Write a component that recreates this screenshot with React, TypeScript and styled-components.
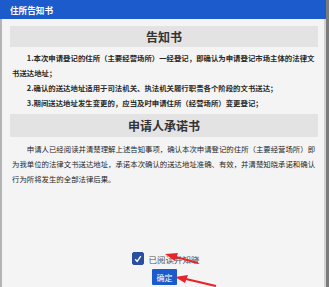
import React, { useState } from "react";
import styled, { createGlobalStyle } from "styled-components";

const GlobalStyle = createGlobalStyle`
  html, body {
    margin: 0;
    padding: 0;
    background: #7a7a7a;
  }
  body {
    font-family: "Noto Sans CJK SC", "Noto Sans", sans-serif;
  }
`;

const Dialog = styled.div`
  position: relative;
  width: 326px;
  height: 287px;
  display: flex;
  flex-direction: column;
  background: #f4f4f4;
  overflow: hidden;
`;

const TitleBar = styled.div`
  height: 19px;
  flex-shrink: 0;
  display: flex;
  align-items: center;
  padding-left: 10px;
  background: #1c5bcb;
  color: #fff;
  font-size: 8.6px;
  font-weight: bold;
`;

const Body = styled.div`
  flex: 1;
  display: flex;
  flex-direction: column;
  padding: 7px 6px 0 8px;
  border-left: 2px solid #b4b4b4;
  border-right: 2px solid #d2d2d2;
  color: #333;
`;

const SectionTitle = styled.div<{ $height: number }>`
  height: ${(p) => p.$height}px;
  display: flex;
  align-items: center;
  justify-content: center;
  background: #e3e3e3;
  font-size: 12px;
  font-weight: bold;
  color: #333;
`;

const Text = styled.p<{ $bold?: boolean }>`
  margin: 0;
  padding: 0 2px;
  font-size: 7.4px;
  line-height: 15px;
  text-indent: 2em;
  font-weight: ${(p) => (p.$bold ? "bold" : "normal")};
  color: ${(p) => (p.$bold ? "#2a2a2a" : "#262626")};
`;

const Block = styled.div<{ $top: number; $bottom: number }>`
  margin: ${(p) => p.$top}px 0 ${(p) => p.$bottom}px;
`;

const Footer = styled.div`
  margin-top: auto;
  display: flex;
  flex-direction: column;
  align-items: center;
  gap: 4px;
  padding: 0 0 2px;
`;

const AgreeRow = styled.label`
  display: flex;
  align-items: center;
  gap: 4px;
  font-size: 8.5px;
  color: #555;
  margin-left: 4px;
`;

const Box = styled.span<{ $checked: boolean }>`
  width: 12px;
  height: 13px;
  border-radius: 2px;
  display: flex;
  align-items: center;
  justify-content: center;
  background: ${(p) => (p.$checked ? "#2a4f9e" : "#fff")};
  border: 1px solid #2a4f9e;
  box-sizing: border-box;
`;

const ConfirmButton = styled.button`
  width: 25px;
  height: 16px;
  padding: 0;
  border: none;
  border-radius: 1px;
  background: #1c5bcb;
  color: #fff;
  font-family: inherit;
  font-size: 8px;
  margin-left: 1px;
`;

const Arrows = styled.svg`
  position: absolute;
  left: 0;
  top: 0;
  pointer-events: none;
`;

export default function App() {
  const [checked, setChecked] = useState(true);
  return (
    <>
      <GlobalStyle />
      <Dialog>
        <TitleBar>住所告知书</TitleBar>
        <Body>
          <SectionTitle $height={21}>告知书</SectionTitle>
          <Block $top={3} $bottom={4}>
            <Text $bold>
              1.本次申请登记的住所（主要经营场所）一经登记，即确认为申请登记市场主体的法律文书送达地址；
            </Text>
            <Text $bold>
              2.确认的送达地址适用于司法机关、执法机关履行职责各个阶段的文书送达；
            </Text>
            <Text $bold>
              3.期间送达地址发生变更的，应当及时申请住所（经营场所）变更登记；
            </Text>
          </Block>
          <SectionTitle $height={23}>申请人承诺书</SectionTitle>
          <Block $top={4} $bottom={0}>
            <Text>
              申请人已经阅读并清楚理解上述告知事项，确认本次申请登记的住所（主要经营场所）即为我单位的法律文书送达地址，承诺本次确认的送达地址准确、有效，并清楚知晓承诺和确认行为所将发生的全部法律后果。
            </Text>
          </Block>
          <Footer>
            <AgreeRow onClick={() => setChecked(!checked)}>
              <Box $checked={checked}>
                {checked && (
                  <svg width="8" height="8" viewBox="0 0 8 8">
                    <path d="M1.2 4.2 L3.2 6.4 L6.8 1.2" stroke="#fff" strokeWidth="1.3" fill="none" />
                  </svg>
                )}
              </Box>
              已阅读并知晓
            </AgreeRow>
            <ConfirmButton>确定</ConfirmButton>
          </Footer>
        </Body>
        <Arrows width="326" height="287" viewBox="0 0 326 287">
          <path d="M198 263 L176 257" stroke="#e8242a" strokeWidth="2.2" />
          <polygon points="165,254 178,253 175,261" fill="#e8242a" />
          <path d="M216 286 L186 279" stroke="#e8242a" strokeWidth="2.2" />
          <polygon points="175,277 188,275 185,283" fill="#e8242a" />
        </Arrows>
      </Dialog>
    </>
  );
}
